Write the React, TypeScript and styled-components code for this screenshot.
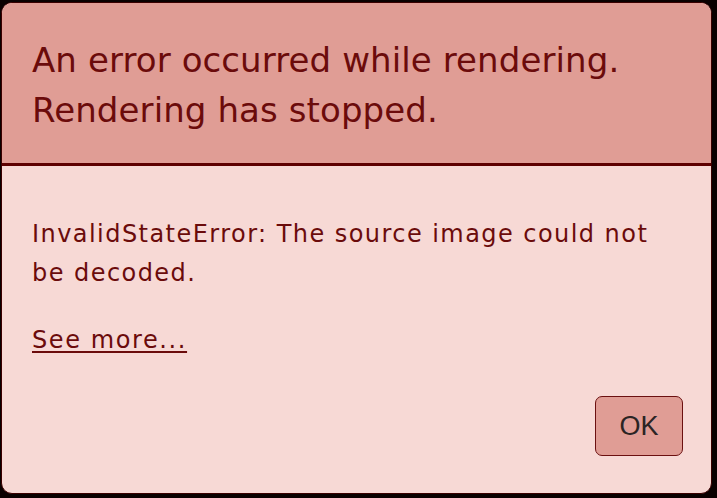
import React from 'react';
import styled, { createGlobalStyle } from 'styled-components';

const GlobalStyle = createGlobalStyle`
  html, body {
    margin: 0;
    padding: 0;
    background: #0a0000;
  }
  #root {
    height: 100vh;
  }
`;

const Screen = styled.div`
  box-sizing: border-box;
  height: 100vh;
  padding: 2px 5px 4px 1px;
  display: flex;
`;

const Dialog = styled.div`
  flex: 1;
  display: flex;
  flex-direction: column;
  border: 1px solid #3a0000;
  border-radius: 11px;
  overflow: hidden;
  background: #f7d9d5;
  font-family: 'DejaVu Sans', Verdana, sans-serif;
  color: #6b0b0b;
`;

const Header = styled.div`
  background: #e09d95;
  border-bottom: 3px solid #5e0000;
  padding: 32px 30px 28px 30px;
`;

const Title = styled.h1`
  margin: 0;
  font-size: 34px;
  font-weight: normal;
  line-height: 50px;
  letter-spacing: 0.1px;
`;

const Body = styled.div`
  flex: 1;
  display: flex;
  flex-direction: column;
  padding: 49px 28px 37px 30px;
`;

const Message = styled.p`
  margin: 0;
  font-size: 24px;
  line-height: 39px;
  letter-spacing: 1.45px;
`;

const MoreLink = styled.a`
  margin-top: 28px;
  font-size: 24px;
  line-height: 39px;
  letter-spacing: 1.6px;
  color: inherit;
  text-decoration: underline;
  text-underline-offset: 3px;
  align-self: flex-start;
  cursor: pointer;
`;

const Actions = styled.div`
  margin-top: auto;
  display: flex;
  justify-content: flex-end;
`;

const OkButton = styled.button`
  width: 88px;
  height: 60px;
  background: #e09d95;
  border: 1.5px solid #6b1010;
  border-radius: 7px;
  font-family: 'Liberation Sans', Arial, sans-serif;
  font-size: 27px;
  color: #2b2424;
  cursor: pointer;
`;

export default function App() {
  return (
    <>
      <GlobalStyle />
      <Screen>
        <Dialog role="alertdialog">
          <Header>
            <Title>
              An error occurred while rendering.
              <br />
              Rendering has stopped.
            </Title>
          </Header>
          <Body>
            <Message>InvalidStateError: The source image could not be decoded.</Message>
            <MoreLink>See more...</MoreLink>
            <Actions>
              <OkButton>OK</OkButton>
            </Actions>
          </Body>
        </Dialog>
      </Screen>
    </>
  );
}
